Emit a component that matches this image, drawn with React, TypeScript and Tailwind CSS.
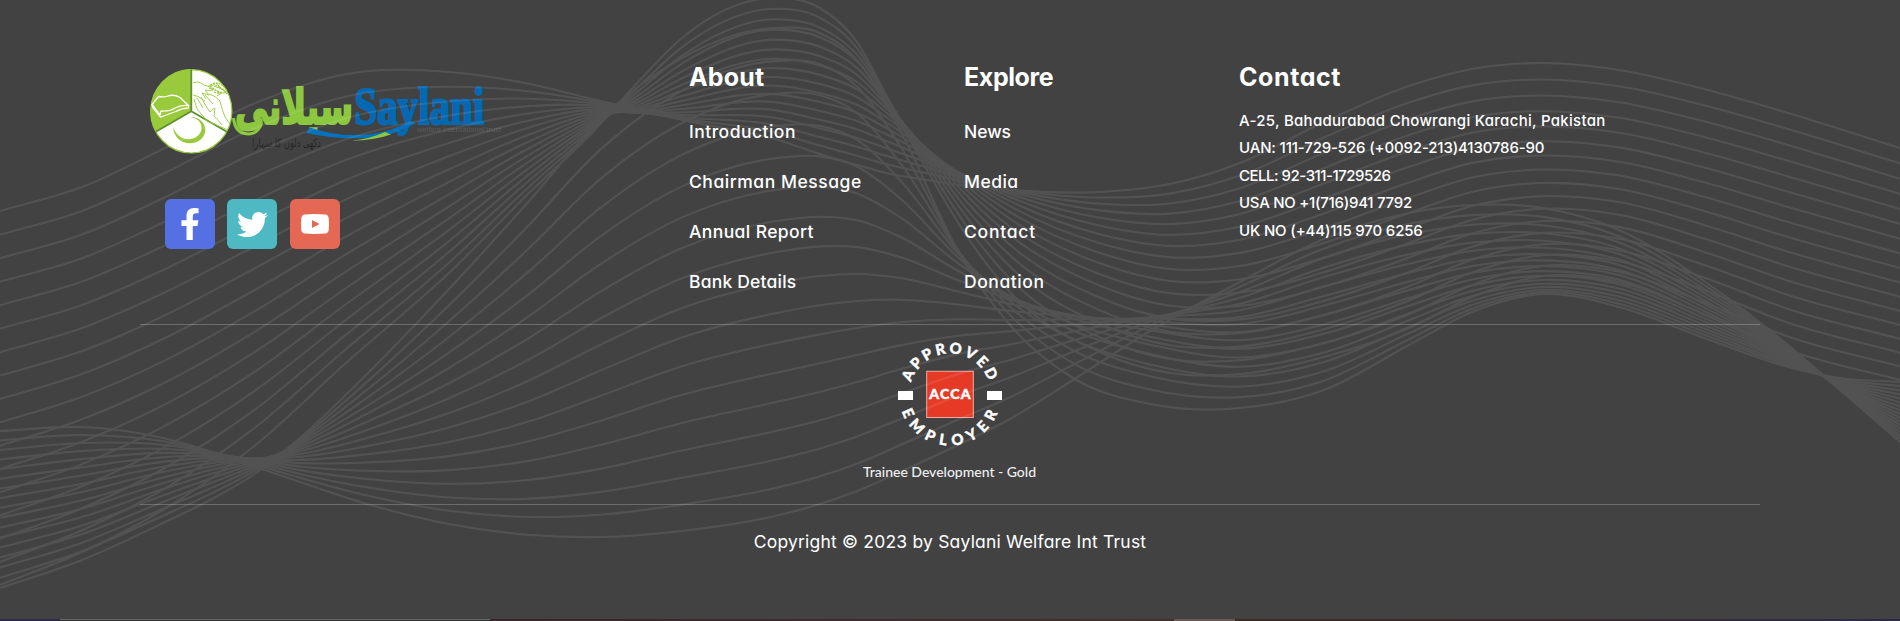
import { FaFacebookF, FaTwitter } from "react-icons/fa";

type Station = [x: number, first: number, middle: number, last: number];

const LINES = 17;

const waveA: Station[] = [
  [0, 211, 399, 585], [82, 187, 374, 552], [163, 149, 339, 510], [253, 104, 291, 447],
  [347, 74, 236, 362], [449, 72, 182, 273], [530, 84, 141, 192], [592, 99, 116, 133],
  [640, 110, 109, 80], [682, 120, 96, 38], [775, 139, 77, -2], [820, 154, 84, 8],
  [857, 165, 97, 42], [886, 173, 117, 95], [927, 180, 149, 170], [968, 186, 183, 238],
  [1010, 190, 212, 292], [1100, 192, 253, 352], [1170, 184, 269, 373], [1240, 163, 266, 374],
  [1324, 122, 243, 357], [1409, 86, 213, 328], [1472, 69, 192, 297], [1543, 63, 183, 276],
  [1619, 70, 189, 282], [1704, 89, 211, 314], [1788, 113, 237, 350], [1900, 148, 268, 380],
];

const waveB: Station[] = [
  [0, 431, 508, 588], [82, 427, 492, 560], [163, 438, 472, 523], [212, 452, 463, 499],
  [253, 466, 459, 475], [300, 482, 454, 438], [367, 504, 438, 374], [449, 524, 413, 289],
  [530, 535, 380, 200], [600, 537, 345, 120], [682, 531, 308, 58], [775, 516, 283, 28],
  [820, 504, 276, 33], [857, 491, 274, 60], [900, 472, 278, 130], [960, 444, 292, 255],
  [1010, 419, 304, 325], [1073, 380, 315, 378], [1150, 331, 325, 404], [1240, 282, 332, 408],
  [1324, 239, 315, 390], [1409, 213, 290, 345], [1472, 205, 273, 312], [1543, 208, 266, 294],
  [1619, 230, 275, 307], [1704, 281, 311, 338], [1788, 345, 354, 367], [1840, 390, 386, 378],
  [1900, 442, 414, 382],
];

// Blends the three guide curves quadratically, then smooths the result with a cubic spline.
function wavePath(stations: Station[], index: number): string {
  const t = index / (LINES - 1);
  const a = (1 - t) * (1 - 2 * t);
  const b = 4 * t * (1 - t);
  const c = t * (2 * t - 1);
  const pts = stations.map(([x, p, q, r]) => [x, a * p + b * q + c * r]);
  const n = pts.length - 1;
  const rise = (i: number) => (pts[i + 1][1] - pts[i][1]) / (pts[i + 1][0] - pts[i][0]);
  const slopes = pts.map((p, i) => {
    if (i === 0) return rise(0);
    if (i === n) return rise(n - 1);
    const hl = p[0] - pts[i - 1][0];
    const hr = pts[i + 1][0] - p[0];
    return (rise(i - 1) * hr + rise(i) * hl) / (hl + hr);
  });
  let d = `M${pts[0][0]} ${pts[0][1].toFixed(1)}`;
  for (let i = 0; i < n; i++) {
    const [x0, y0] = pts[i];
    const [x1, y1] = pts[i + 1];
    const h = (x1 - x0) / 3;
    d += `C${(x0 + h).toFixed(1)} ${(y0 + slopes[i] * h).toFixed(1)} ${(x1 - h).toFixed(1)} ${(y1 - slopes[i + 1] * h).toFixed(1)} ${x1} ${y1.toFixed(1)}`;
  }
  return d;
}

function Waves() {
  const ids = Array.from({ length: LINES }, (_, i) => i);
  return (
    <svg className="pointer-events-none absolute inset-0 opacity-[0.085]" width="1900" height="619" viewBox="0 0 1900 619" fill="none" stroke="#fff" strokeWidth="2.1">
      {ids.map((i) => <path key={`a${i}`} d={wavePath(waveA, i)} />)}
      {ids.map((i) => <path key={`b${i}`} d={wavePath(waveB, i)} />)}
    </svg>
  );
}

function Logo() {
  return (
    <svg width="380" height="104" viewBox="140 60 380 104" className="block overflow-visible">
      <ellipse cx="191.300" cy="111.300" rx="40.600" ry="41.700" fill="#fff" stroke="#99ca3c" strokeWidth="1.2" />
      <path d="M191 111.300V69.600A40.600 41.700 0 0 0 155.800 132Z" fill="#99ca3c" />
      <path d="M191.300 69.500V111.300M155.800 131.800L191.300 111.300L226.800 131.800" fill="none" stroke="#5f8f2d" strokeWidth="1.8" />
      <g fill="none" stroke="#fff" strokeWidth="1.3" strokeLinejoin="round">
        <path d="M152 104.500L158.500 96.500Q164 97.500 168 96Q174 94 180 97.500L188.500 105.500Q181 104.500 175 108Q170 111.500 161 111L160 115Z" />
        <path d="M152 104.500L152.800 107.500L160.500 117.200Q170 113.500 176 111.500Q182 108 188.500 108V105.500" />
      </g>
      <path d="M190 117C200 116.500 205.500 123.500 205.300 130C205 138 198 143.300 190 143.300C180 143.300 173.500 136 173 127C176 135 182 139.500 189 139.200C197 139 202 133 201.500 127C201 121.500 197 118 190 117Z" fill="#99ca3c" />
      <g fill="none" stroke="#99ca3c" strokeWidth="0.9" strokeLinejoin="round">
        <path d="M193 82.500L199 82Q204 86 209 86.500L213 90Q209 91 205 90L209 95L202 93L206 99M193 95L198 96.500L205 101" />
        <path d="M208 87Q212 82.500 218 83Q224 85 227 91Q222 95 214 92M211 85L225 90M213 83.500L226 92M209 88L223 93M216 83L227 94M210 86L220 93" strokeWidth="1.1" strokeDasharray="2.2 .7" />
        <path d="M194 99L197 109L203 116L207 121L212 123L228 130M197 98L203 108M201 97L206 106L210 112M205 95L213 104M209 94Q216 96 220 101Q222 110 225 117L230 124M210 112Q212 109 215 108L214 116Q218 120 222 125M217 96L221 93.500" />
      </g>
      <text x="235" y="124" direction="ltr" textLength="118" lengthAdjust="spacingAndGlyphs" fill="#8cc83f" stroke="#8cc83f" strokeWidth="2.2" className="font-['DejaVu_Sans',sans-serif] text-[49px] font-bold">سیلانی</text>
      <path d="M233.500 118Q235 134 249 134Q259 133 261.500 123" fill="none" stroke="#8cc83f" strokeWidth="3" />
      <text x="354.500" y="124" textLength="130" lengthAdjust="spacingAndGlyphs" fill="#0468b3" stroke="#0468b3" strokeWidth="2.2" className="font-['Liberation_Serif',serif] text-[52px] font-bold">Saylani</text>
      <path d="M310 127.500Q340 138 372 134Q396 130 410 121L416 123Q398 134 376 137Q344 141 306 133Z" fill="#0472bd" />
      <path d="M351 140.500Q370 139 385 132L391 134.500Q374 140.500 351 140.500Z" fill="#8cc83f" />
      <text x="417" y="131.500" textLength="84" lengthAdjust="spacingAndGlyphs" fill="#5c5c5c" className="font-['Liberation_Sans',sans-serif] text-[7px]">welfare international trust</text>
      <text x="252" y="147" textLength="69" lengthAdjust="spacingAndGlyphs" fill="#252525" className="font-['DejaVu_Sans',sans-serif] text-[12px]">دکھی دلوں کا سہارا</text>
    </svg>
  );
}

function Social() {
  return (
    <div className="relative z-10 mt-[35px] ml-[25px] flex gap-[12.5px] text-white">
      <a className="flex size-[50px] items-center justify-center rounded-md bg-[#5570e3]"><FaFacebookF size={32} /></a>
      <a className="-ml-[0.5px] flex size-[50px] items-center justify-center rounded-md bg-[#4eb9c2]"><FaTwitter size={31} /></a>
      <a className="ml-[0.5px] flex size-[50px] items-center justify-center rounded-md bg-[#e46853]">
        <svg width="28" height="20" viewBox="0 0 28 20">
          <path d="M4 .4Q14-.3 24 .4Q27.300 .7 27.700 4Q28.200 10 27.700 16Q27.300 19.300 24 19.600Q14 20.300 4 19.600Q.7 19.300 .3 16Q-.2 10 .3 4Q.7 .7 4 .4Z" fill="#fff" />
          <path d="M11 6L18.500 10L11 14Z" fill="#e46853" />
        </svg>
      </a>
    </div>
  );
}

function Badge() {
  return (
    <svg width="190" height="150" viewBox="855 336 190 150" fill="#fff" className="block">
      <defs>
        <path id="arc-top" d="M911.200 382.400A40.500 40.500 0 0 1 988.800 382.400" />
        <path id="arc-bottom" d="M901.800 411.100A51 51 0 0 0 998.200 411.100" />
      </defs>
      <g stroke="#fff" strokeWidth="0.4" className="font-['Lato',sans-serif] text-[15px] font-black">
        <text textLength="102"><textPath href="#arc-top" textLength="102">APPROVED</textPath></text>
        <text textLength="124"><textPath href="#arc-bottom" textLength="124">EMPLOYER</textPath></text>
      </g>
      <path d="M898 391h15v9h-15zM987 391h15v9h-15z" />
      <rect x="926.700" y="371.300" width="46.600" height="46.200" fill="#e63a27" stroke="#f3aaa2" strokeWidth="1" />
      <text x="929.200" y="399.300" textLength="41.500" stroke="#fff" strokeWidth="0.5" className="font-['Lato',sans-serif] text-[14px] font-black">ACCA</text>
      <text x="863" y="477.300" textLength="173" fill="#eee" className="font-['Lato',sans-serif] text-[14px] font-medium">Trainee Development - Gold</text>
    </svg>
  );
}

type Entry = { text: string; tracking: string };

const about: Entry[] = [
  { text: "Introduction", tracking: "tracking-[0.48px]" },
  { text: "Chairman Message", tracking: "tracking-[0.54px]" },
  { text: "Annual Report", tracking: "tracking-[0.4px]" },
  { text: "Bank Details", tracking: "tracking-[0.2px]" },
];

const explore: Entry[] = [
  { text: "News", tracking: "tracking-[-0.04px]" },
  { text: "Media", tracking: "tracking-[0.44px]" },
  { text: "Contact", tracking: "tracking-[0.76px]" },
  { text: "Donation", tracking: "tracking-[0.57px]" },
];

const contact: Entry[] = [
  { text: "A-25, Bahadurabad Chowrangi Karachi, Pakistan", tracking: "tracking-[0.29px]" },
  { text: "UAN: 111-729-526 (+0092-213)4130786-90", tracking: "tracking-[-0.15px]" },
  { text: "CELL: 92-311-1729526", tracking: "tracking-[-0.49px]" },
  { text: "USA NO +1(716)941 7792", tracking: "tracking-[-0.27px]" },
  { text: "UK NO (+44)115 970 6256", tracking: "tracking-[-0.16px]" },
];

function Column({ title, tracking, items, list }: { title: string; tracking: string; items: Entry[]; list: string }) {
  return (
    <div className="w-[275px] pt-[61px] whitespace-nowrap">
      <h3 className={`text-[25px] leading-[32px] font-bold ${tracking}`}>{title}</h3>
      <ul className={`mt-[14px] font-medium ${list}`}>
        {items.map((item) => <li key={item.text} className={item.tracking}>{item.text}</li>)}
      </ul>
    </div>
  );
}

export default function App() {
  return (
    <footer className="relative flex h-[621px] flex-col overflow-hidden bg-[#424242] font-['Inter',sans-serif] text-white [font-feature-settings:'cv11']">
      <div className="mx-auto flex h-[325px] w-[1620px] border-b border-[#6c6c6c]">
        <div className="w-[549px] pt-[60px]"><Logo /><Social /></div>
        <Column title="About" tracking="tracking-[0.2px]" items={about} list="text-[17.5px] leading-[50px]" />
        <Column title="Explore" tracking="tracking-[-0.4px]" items={explore} list="text-[17.5px] leading-[50px]" />
        <Column title="Contact" tracking="tracking-[0.6px]" items={contact} list="text-[15px] leading-[27.4px]" />
      </div>
      <div className="mx-auto flex h-[180px] w-[1620px] justify-center border-b border-[#6c6c6c] pt-[11px]"><Badge /></div>
      <p className="pt-[23px] text-center text-[17.5px] leading-[28px] tracking-[0.2px]">Copyright © 2023 by Saylani Welfare Int Trust</p>
      <div className="mt-auto flex h-[2px] w-full">
        <div className="w-[60px] bg-[#2c2c4a]" />
        <div className="w-[430px] border-t border-[#666] bg-[#333]" />
        <div className="w-[684px] bg-linear-to-r from-[#38262a] via-[#402a2e] to-[#46302a]" />
        <div className="w-[61px] bg-[#6b5752]" />
        <div className="flex-1 bg-linear-to-r from-[#3c2a22] via-[#3a2a2e] to-[#2a2a48]" />
      </div>
      <Waves />
    </footer>
  );
}
